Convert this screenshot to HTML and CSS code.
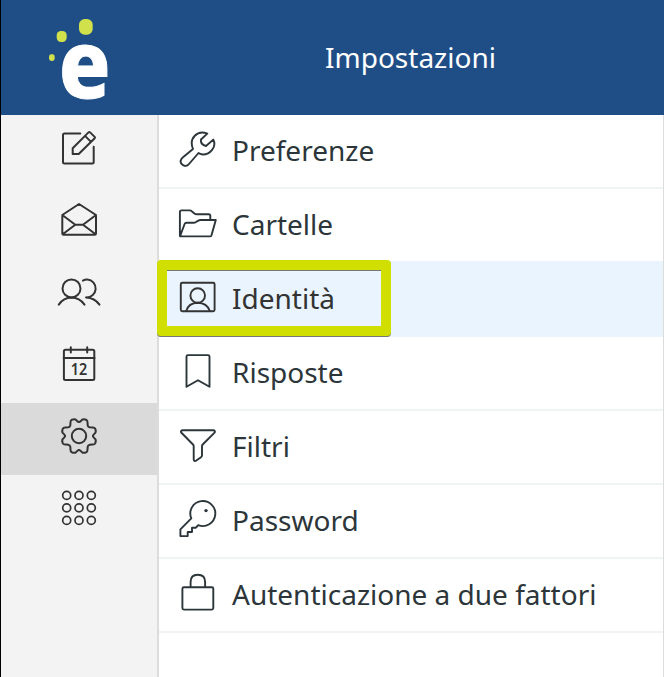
FILE: index.html
```html
<!DOCTYPE html>
<html lang="it">
<head>
<meta charset="utf-8">
<title>Impostazioni</title>
<link rel="stylesheet" href="styles.css">
</head>
<body>
<div class="app">
  <header class="header">
    <div class="brand">
      <svg class="logo" viewBox="1 0 156 115" aria-label="e">
        <rect x="79" y="19" width="13.7" height="15.7" rx="5.7"/>
        <rect x="56.7" y="31" width="10" height="11" rx="4.2"/>
        <rect x="49" y="54.3" width="5.7" height="6.6" rx="2.4"/>
        <text class="logo-letter" transform="translate(58.8 98.4) scale(.9 1)">e</text>
      </svg>
    </div>
    <h1 class="title">Impostazioni</h1>
  </header>
  <div class="body">
    <nav class="sidebar">
      <a class="nav-item"><svg class="nav-icon" viewBox="55 124 48 48"><path d="M80.3 133.4H64.5Q63 133.4 63 134.9V162.1Q63 163.6 64.5 163.6H92.2Q93.7 163.6 93.7 162.1V146.7M72.7 154V148.3L88.5 132.4Q89.3 131.7 90.1 132.4L94.7 136.9Q95.3 137.6 94.7 138.2L78.7 154ZM85 135.9L91 141.9"/></svg></a>
      <a class="nav-item"><svg class="nav-icon" viewBox="55 196 48 48"><path d="M62.3 215L79 204L96 215V233.5Q96 234.8 94.7 234.8H63.6Q62.3 234.8 62.3 233.5ZM62.3 215L75.3 224.7H83L96 215M63 234L75.3 224.7M95.3 234L83 224.7"/></svg></a>
      <a class="nav-item"><svg class="nav-icon" viewBox="55 268 48 48"><circle cx="71.5" cy="288.4" r="9"/><path d="M58.8 304.6Q63.5 297.8 71.5 297.6Q79.5 297.8 84.5 304.6M82.9 280.6Q85 279.4 87.4 279.5A8.9 8.9 0 0 1 86 297.4Q94.8 297.8 99.5 304.6"/></svg></a>
      <a class="nav-item"><svg class="nav-icon" viewBox="55 340 48 48"><rect x="63.9" y="349.8" width="30.4" height="30.2" rx="1.5"/><path d="M63.7 358H94.5M70.8 347.2V352.6M87.2 347.2V352.6"/><text class="day" transform="translate(79 375) scale(.9 1.06)">12</text></svg></a>
      <a class="nav-item active"><svg class="nav-icon" viewBox="-24 -24 48 48"><defs><path id="tooth" d="M0-14Q1.3-14 3-16.2Q4.3-17.4 7.3-16.2Q8.6-15.6 8.5-13.5L8.7-10.7Q9-9 10.7-8.7L13.5-8.5Q15.6-8.6 16.2-7.3Q17.4-4.3 16.2-3Q14-1.3 14 0"/></defs><circle r="7.2"/><use href="#tooth"/><use href="#tooth" transform="rotate(90)"/><use href="#tooth" transform="rotate(180)"/><use href="#tooth" transform="rotate(270)"/></svg></a>
      <a class="nav-item"><svg class="nav-icon thin" viewBox="55 484 48 48"><circle cx="66.7" cy="495.4" r="4"/><circle cx="79" cy="495.4" r="4"/><circle cx="91.3" cy="495.4" r="4"/><circle cx="66.7" cy="507.9" r="4"/><circle cx="79" cy="507.9" r="4"/><circle cx="91.3" cy="507.9" r="4"/><circle cx="66.7" cy="520.4" r="4"/><circle cx="79" cy="520.4" r="4"/><circle cx="91.3" cy="520.4" r="4"/></svg></a>
    </nav>
    <main class="settings">
      <a class="row"><svg class="row-icon" viewBox="177 129 40 40"><path d="M207.3 133.6L201 139.5Q200.2 144.5 206 146L213.3 139.6C217 147 210 154.8 202.5 154.5Q200 154.2 198.5 153L189 164C186 168 178.5 164.5 181.3 159.2Q182 158 183 157.3L193 149C188.5 138 197.5 129.8 207.3 133.6Z"/></svg><span class="label">Preferenze</span></a>
      <a class="row"><svg class="row-icon" viewBox="177 203 40 40"><path d="M179.9 236V212Q179.9 210.4 181.5 210.4H189.5Q191 210.4 192 211.4L194.4 213.4Q195.4 214.2 197 214.2H208.7Q210.3 214.2 210.3 215.8V220M180 236.3L184.6 224Q185.1 222.7 186.5 222.7H193.5Q195 222.7 196 222L198.3 220.6Q199.2 220 200.5 220H215.8L211.5 235.2Q211.1 236.4 210 236.4Z"/></svg><span class="label">Cartelle</span></a>
      <a class="row selected"><svg class="row-icon" viewBox="177 277 40 40"><rect x="180.8" y="282.8" width="33.8" height="28.4" rx="1.5"/><circle cx="197.7" cy="295.5" r="7.3"/><path d="M186.3 311Q188.5 303 197.7 302.8Q207 303 209.8 311"/></svg><span class="label">Identità</span><span class="highlight"></span></a>
      <a class="row"><svg class="row-icon" viewBox="177 351 40 40"><path d="M186.5 386.8V356.6Q186.5 355.1 188 355.1H208Q209.5 355.1 209.5 356.6V386.8L198 380.2Z"/></svg><span class="label">Risposte</span></a>
      <a class="row"><svg class="row-icon" viewBox="177 425 40 40"><path d="M182.5 430.2H213.3Q215.3 430.4 214.8 432.3L202.7 444.5Q202 445.2 202 446.2V455.2Q202 456.5 201 457.2L196.3 460.6Q194 461.7 193.7 459.5V446.2Q193.7 445.2 193 444.5L181.2 432.5Q180.3 430.7 182.5 430.2Z"/></svg><span class="label">Filtri</span></a>
      <a class="row"><svg class="row-icon" viewBox="177 499 40 40"><path d="M191.3 518.4A12.5 12.5 0 1 1 198.3 525.2L195.7 527.7H192V532H187.7V536.1H180.4V529.4Z"/><circle class="solid" cx="206" cy="510.6" r="1.7"/></svg><span class="label">Password</span></a>
      <a class="row"><svg class="row-icon" viewBox="177 573 40 40"><rect x="182.4" y="587.2" width="30.9" height="22.4" rx="1.5"/><path d="M190.6 587V582Q190.6 574.8 197.8 574.8Q205.1 574.8 205.1 582V587"/></svg><span class="label">Autenticazione a due fattori</span></a>
    </main>
  </div>
</div>
</body>
</html>
```
FILE: styles.css
```css
* { box-sizing: border-box; }
body {
  margin: 0;
  font-family: "Noto Sans", sans-serif;
  color: #2c363a;
  background: #fff;
}
.app {
  height: 677px;
  border-left: 1px solid #000;
  display: flex;
  flex-direction: column;
}
.header {
  height: 115px;
  flex: none;
  display: flex;
  background: #1f4e87;
  color: #fff;
}
.brand { width: 156px; flex: none; }
.logo {
  display: block;
  width: 156px;
  height: 115px;
  overflow: visible;
  fill: #d0e14b;
}
.logo-letter {
  font: 800 95px "Noto Sans", sans-serif;
  fill: #fff;
  stroke: #fff;
  stroke-width: 1;
}
.title {
  flex: 1;
  margin: 0;
  font-size: 28px;
  font-weight: 400;
  line-height: 115px;
  text-align: center;
}
.body { flex: 1; display: flex; }
.sidebar {
  width: 158px;
  flex: none;
  background: #f3f3f3;
  border-right: 2px solid #dcdcdc;
}
.nav-item {
  height: 72px;
  display: flex;
  justify-content: center;
  padding-top: 9px;
}
.nav-item.active { background: #dadada; }
.nav-icon, .row-icon {
  flex: none;
  fill: none;
  stroke-linejoin: round;
  stroke-linecap: round;
}
.nav-icon {
  width: 48px;
  height: 48px;
  stroke: #333;
  stroke-width: 2;
}
.nav-icon.thin { stroke-width: 1.7; }
.day {
  font: 600 16px "Noto Sans", sans-serif;
  text-anchor: middle;
  fill: #333;
  stroke: none;
}
.settings { flex: 1; border-right: 1px solid #dcdcdc; }
.row {
  position: relative;
  height: 74px;
  display: flex;
  align-items: flex-start;
  gap: 15px;
  padding: 14px 0 0 18px;
  border-bottom: 2px solid #f0f4f4;
}
.row-icon {
  width: 40px;
  height: 40px;
  stroke: #2c363a;
  stroke-width: 1.9;
}
.solid { fill: #2c363a; stroke: none; }
.label {
  font-size: 28px;
  line-height: 42px;
  white-space: nowrap;
}
.selected {
  background: #e9f4fe;
  border-color: #e9f4fe;
  box-shadow: 0 -2px #e9f4fe;
  color: #333;
}
.selected .row-icon { stroke: #333; }
.highlight {
  position: absolute;
  left: -2px;
  top: -3px;
  width: 234px;
  height: 76px;
  border: 10px solid #d0df00;
  border-radius: 4px;
  filter: drop-shadow(0 1px 0 #777);
}
```
